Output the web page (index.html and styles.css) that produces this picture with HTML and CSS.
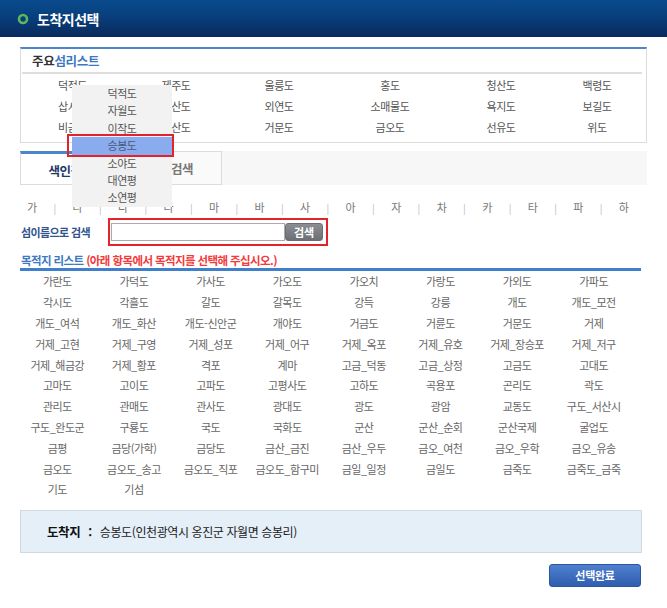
FILE: index.html
```html
<!DOCTYPE html>
<html lang="ko">
<head>
<meta charset="utf-8">
<title>도착지선택</title>
<link rel="stylesheet" href="styles.css">
</head>
<body>
<header class="top">
  <svg class="top-icon" width="12" height="12" viewBox="0 0 12 12"><circle cx="6" cy="6" r="4" fill="none" stroke="#5cb85c" stroke-width="2.6"/></svg>
  <h1 class="top-title">도착지선택</h1>
</header>

<main class="page">
  <section class="major">
    <h2 class="major-title"><span class="dark">주요</span><span class="blue">섬리스트</span></h2>
    <div class="major-grid">
      <span>덕적도</span><span>제주도</span><span>울릉도</span><span>홍도</span><span>청산도</span><span>백령도</span>
      <span>삽시도</span><span>대산도</span><span>외연도</span><span>소매물도</span><span>욕지도</span><span>보길도</span>
      <span>비금도</span><span>관산도</span><span>거문도</span><span>금오도</span><span>선유도</span><span>위도</span>
    </div>
  </section>

  <div class="tabs">
    <div class="tab active">색인검색</div>
    <div class="tab">지역검색</div>
    <div class="tab-rest"></div>
  </div>

  <div class="letters">
    <span>가</span><i>|</i><span>나</span><i>|</i><span>다</span><i>|</i><span>라</span><i>|</i><span>마</span><i>|</i><span>바</span><i>|</i><span>사</span><i>|</i><span>아</span><i>|</i><span>자</span><i>|</i><span>차</span><i>|</i><span>카</span><i>|</i><span>타</span><i>|</i><span>파</span><i>|</i><span>하</span>
  </div>

  <div class="search">
    <label class="search-label">섬이름으로 검색</label>
    <div class="search-box">
      <input class="search-input" type="text">
      <button class="search-btn">검색</button>
    </div>
  </div>

  <h3 class="dest-title"><span class="blue">목적지 리스트</span> <span class="red">(아래 항목에서 목적지를 선택해 주십시오.)</span></h3>
  <div class="dest-grid">
    <span>가란도</span><span>가덕도</span><span>가사도</span><span>가오도</span><span>가오치</span><span>가랑도</span><span>가외도</span><span>가파도</span>
    <span>각시도</span><span>각흘도</span><span>갈도</span><span>갈목도</span><span>강득</span><span>강릉</span><span>개도</span><span>개도_모전</span>
    <span>개도_여석</span><span>개도_화산</span><span>개도-신안군</span><span>개야도</span><span>거금도</span><span>거륜도</span><span>거문도</span><span>거제</span>
    <span>거제_고현</span><span>거제_구영</span><span>거제_성포</span><span>거제_어구</span><span>거제_옥포</span><span>거제_유호</span><span>거제_장승포</span><span>거제_저구</span>
    <span>거제_해금강</span><span>거제_황포</span><span>격포</span><span>계마</span><span>고금_덕동</span><span>고금_상정</span><span>고금도</span><span>고대도</span>
    <span>고마도</span><span>고이도</span><span>고파도</span><span>고평사도</span><span>고하도</span><span>곡용포</span><span>곤리도</span><span>곽도</span>
    <span>관리도</span><span>관매도</span><span>관사도</span><span>광대도</span><span>광도</span><span>광암</span><span>교동도</span><span>구도_서산시</span>
    <span>구도_완도군</span><span>구룡도</span><span>국도</span><span>국화도</span><span>군산</span><span>군산_순회</span><span>군산국제</span><span>굴업도</span>
    <span>금평</span><span>금당(가학)</span><span>금당도</span><span>금산_금진</span><span>금산_우두</span><span>금오_여천</span><span>금오_우학</span><span>금오_유송</span>
    <span>금오도</span><span>금오도_송고</span><span>금오도_직포</span><span>금오도_함구미</span><span>금일_일정</span><span>금일도</span><span>금죽도</span><span>금죽도_금죽</span>
    <span>기도</span><span>기섬</span>
  </div>

  <div class="result">
    <strong>도착지</strong><span class="colon">:</span><span>승봉도(인천광역시 옹진군 자월면 승봉리)</span>
  </div>

  <div class="actions">
    <button class="done-btn">선택완료</button>
  </div>
</main>

<ul class="dropdown">
  <li>덕적도</li>
  <li>자월도</li>
  <li>이작도</li>
  <li class="sel">승봉도</li>
  <li>소야도</li>
  <li>대연평</li>
  <li>소연평</li>
</ul>
<div class="sel-mark"></div>
</body>
</html>
```

FILE: styles.css
```css
* { box-sizing: border-box; }
html, body { margin: 0; padding: 0; }
body {
  width: 667px;
  height: 608px;
  background: #fff;
  font-family: "Noto Sans CJK KR", "Noto Sans", sans-serif;
  font-size: 11px;
  color: #666;
  position: relative;
  overflow: hidden;
}

.top {
  height: 37px;
  background: linear-gradient(#0a4b8e 0%, #083f7c 45%, #0a2a5d 100%);
  display: flex;
  align-items: center;
  padding-left: 17px;
}
.top-icon { display: block; margin-right: 8px; }
.top-title {
  margin: 0;
  color: #fff;
  font-size: 14px;
  font-weight: bold;
  letter-spacing: -0.5px;
  line-height: 1;
}

.page { padding: 10px 20px 0 20px; }

.major {
  width: 627px;
  border: 1px solid #dcdcdc;
  border-top: 2px solid #4a86c8;
  padding: 0 4px 5px 1px;
}
.major-title {
  margin: 0;
  height: 25px;
  line-height: 24px;
  border-bottom: 2px solid #dedede;
  padding-left: 10px;
  font-size: 12.5px;
  font-weight: bold;
  letter-spacing: -0.3px;
}
.dark { color: #333; }
.blue { color: #3d78c2; }
.red { color: #f23b3b; }

.major-grid {
  display: grid;
  grid-template-columns: 101px 106px 100px 122px 100px 92px;
  grid-auto-rows: 21px;
  align-items: center;
  justify-items: center;
  color: #555;
  letter-spacing: -0.4px;
}

.tabs {
  margin-top: 8px;
  width: 627px;
  height: 34px;
  display: flex;
  background: #f7f7f7;
}
.tab {
  width: 101px;
  height: 34px;
  border: 1px solid #dcdcdc;
  background: #fafafa;
  display: flex;
  align-items: center;
  justify-content: center;
  font-size: 12.5px;
  font-weight: bold;
  color: #777;
  letter-spacing: -0.5px;
}
.tab + .tab { border-left: none; width: 101px; }
.tab.active {
  background: #fff;
  border-top: 3px solid #4a86c8;
  color: #1f3767;
  padding-top: 2px;
}
.tab-rest { flex: 1; }

.letters {
  margin: 14px 0 0 7px;
  width: 602px;
  height: 16px;
  display: flex;
  justify-content: space-between;
  align-items: center;
  color: #777;
  font-size: 11px;
}
.letters i { font-style: normal; color: #b8b8c8; font-size: 10px; }

.search {
  margin-top: 3px;
  display: flex;
  align-items: center;
}
.search-label {
  color: #32548c;
  font-weight: bold;
  font-size: 11px;
  letter-spacing: -0.6px;
  width: 88px;
  padding-left: 1px;
}
.search-box {
  border: 2px solid #e3232c;
  padding: 3px 3px 3px 1px;
  display: flex;
  height: 28px;
}
.search-input {
  width: 174px;
  height: 18px;
  border: 1px solid #ababab;
  margin: 0;
  padding: 0;
  background: #fff;
}
.search-btn {
  width: 38px;
  height: 18px;
  margin: 0;
  padding: 0;
  border: 1px solid #6b6e73;
  border-radius: 3px;
  background: linear-gradient(#8b8e93, #6c6f74);
  color: #fff;
  font-family: inherit;
  font-size: 11px;
  font-weight: bold;
  line-height: 16px;
}

.dest-title {
  margin: 6px 0 0 0;
  width: 621px;
  height: 19px;
  line-height: 16px;
  border-bottom: 3px solid #3f7fcc;
  font-size: 11.5px;
  font-weight: bold;
  letter-spacing: -0.6px;
  padding-left: 1px;
}

.dest-grid {
  margin-left: -1px;
  width: 613px;
  display: grid;
  grid-template-columns: repeat(8, 1fr);
  grid-auto-rows: 20.8px;
  align-items: center;
  justify-items: center;
  color: #666;
  letter-spacing: -0.5px;
}

.result {
  margin-top: 10px;
  width: 622px;
  height: 43px;
  border: 1px solid #d3d9df;
  background: #e5eff8;
  display: flex;
  align-items: center;
  padding-left: 26px;
  color: #1a1a1a;
  font-size: 12px;
  letter-spacing: -0.4px;
}
.result strong { font-weight: bold; font-size: 12.5px; color: #111; }
.colon { margin: 0 8px 0 8px; font-weight: bold; }

.actions {
  width: 621px;
  display: flex;
  justify-content: flex-end;
  margin-top: 11px;
}
.done-btn {
  width: 92px;
  height: 23px;
  border: 1px solid #2c559f;
  border-radius: 3px;
  background: linear-gradient(#4f7fcf, #2f5eae);
  color: #fff;
  font-family: inherit;
  font-size: 11px;
  font-weight: bold;
  letter-spacing: -0.3px;
  padding: 0;
}

.dropdown {
  position: absolute;
  left: 72px;
  top: 85px;
  width: 100px;
  margin: 0;
  padding: 0;
  list-style: none;
  background: #f2f2f2;
  color: #555;
  letter-spacing: -0.4px;
}
.dropdown li {
  height: 17.4px;
  line-height: 17.4px;
  text-align: center;
}
.dropdown li.sel { background: #8aabee; color: #4a5a7a; }

.sel-mark {
  position: absolute;
  left: 67px;
  top: 134px;
  width: 107px;
  height: 23px;
  border: 2px solid #e3232c;
}
```
